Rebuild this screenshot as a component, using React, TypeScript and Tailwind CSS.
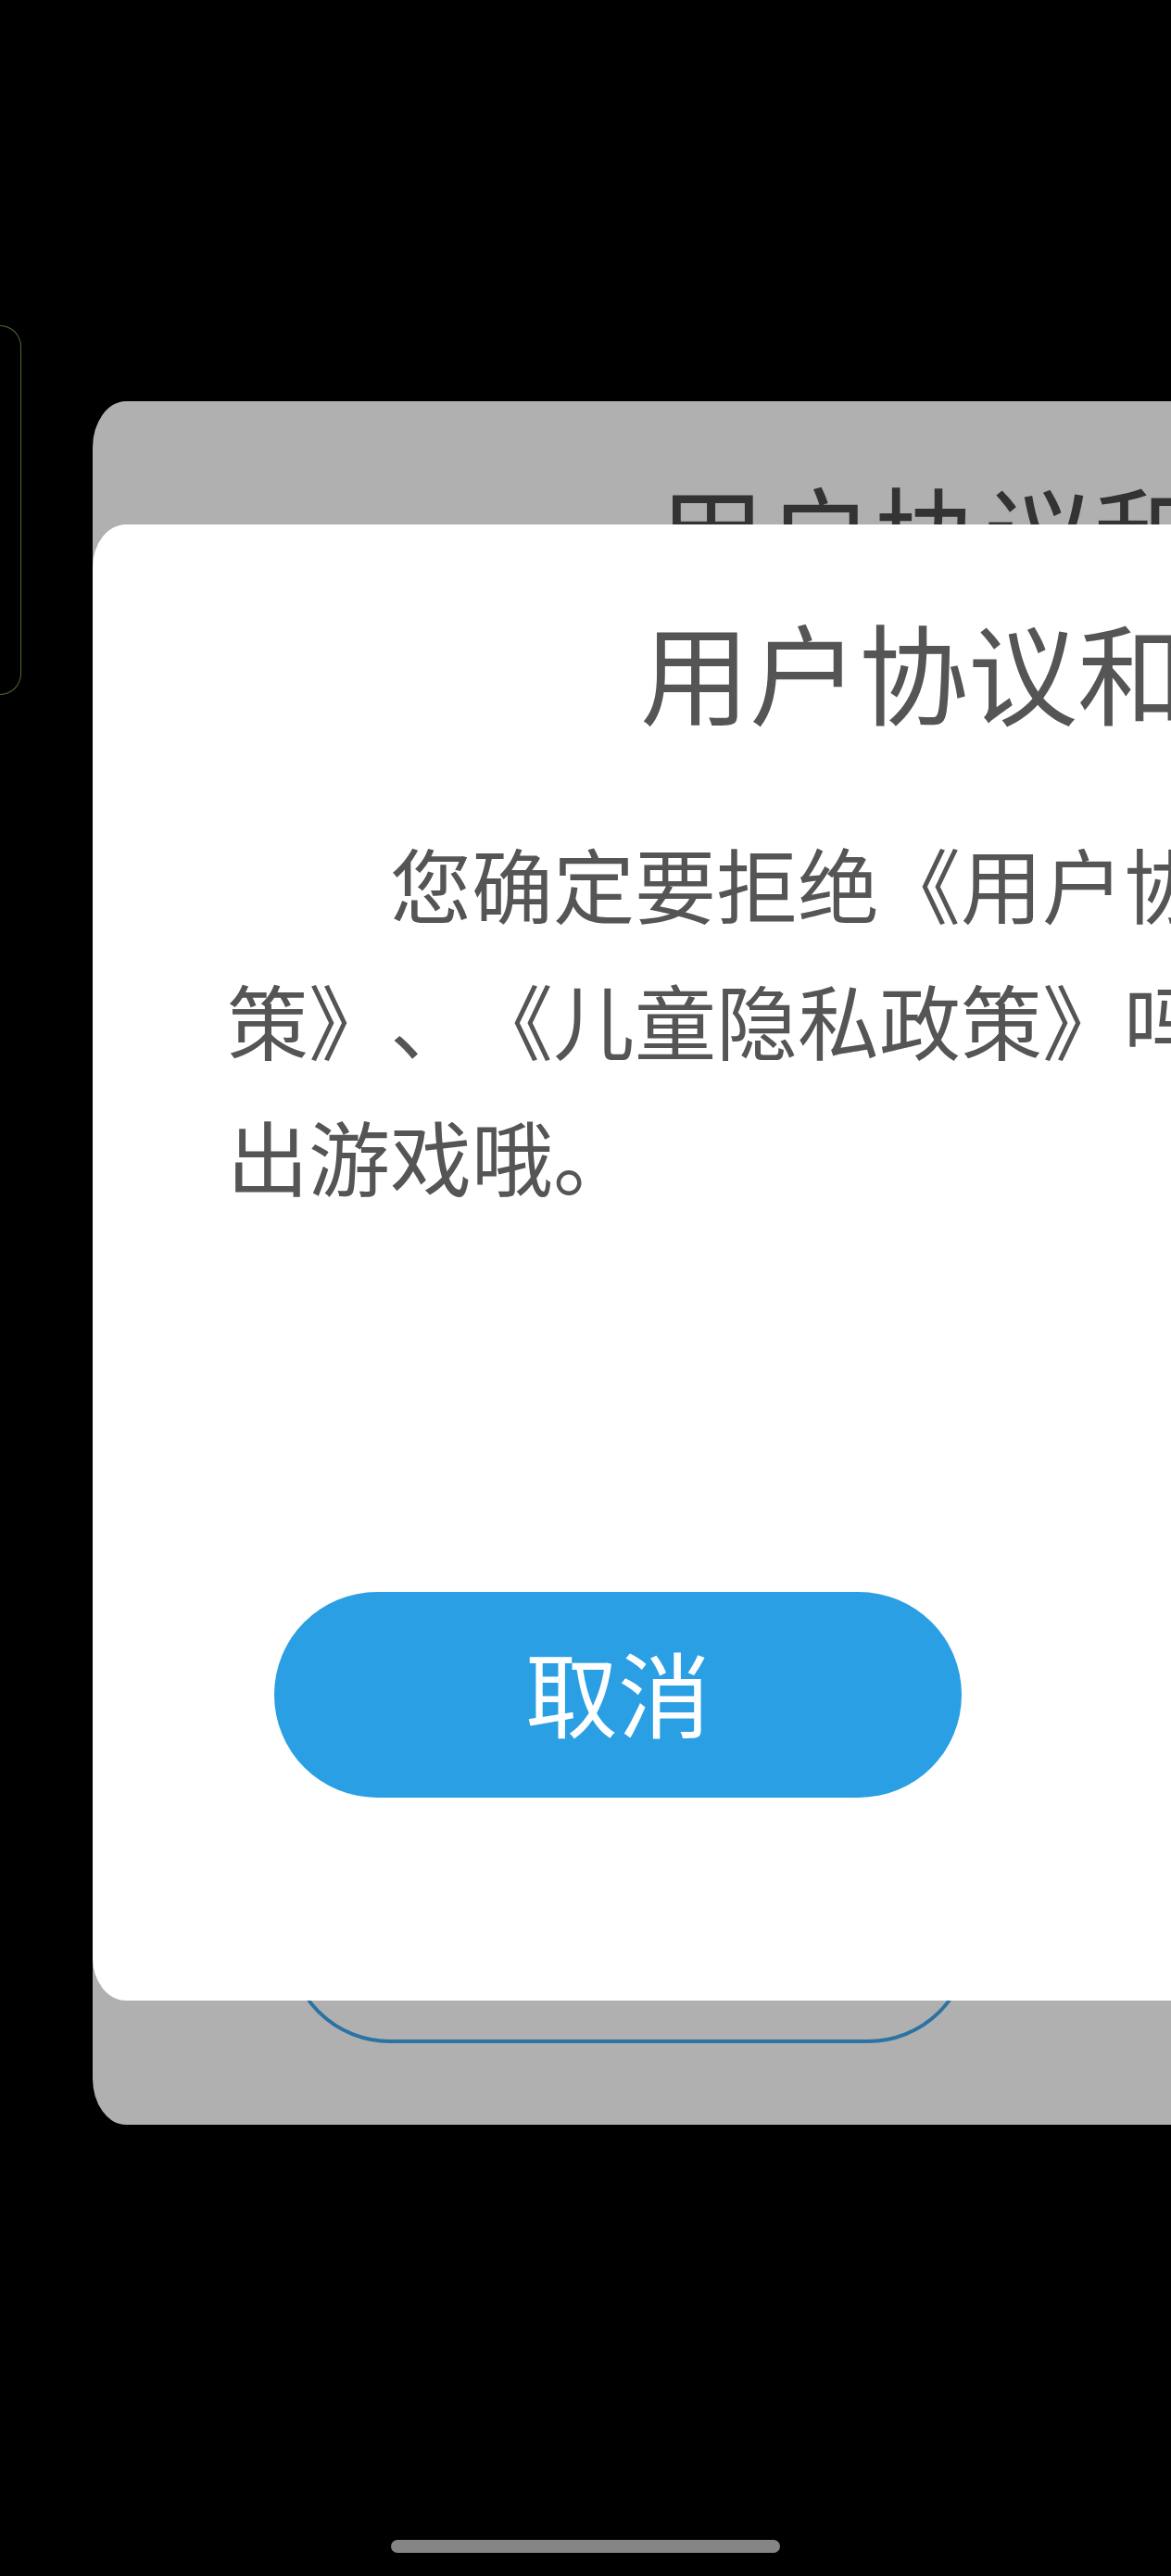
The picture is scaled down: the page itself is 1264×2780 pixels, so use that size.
const cjk = "font-['Noto_Sans_CJK_SC','Noto_Sans',sans-serif] [text-spacing-trim:space-all]";

export default function App() {
  return (
    <div className={`relative flex h-[2780px] w-[1264px] flex-col overflow-hidden bg-black ${cjk}`}>
      <div className="flex min-h-0 flex-1 items-start">
        {/* neighbouring card peeking in from the left */}
        <div className="mt-[351px] h-[399px] w-[23px] shrink-0 rounded-r-[24px] border border-l-0 border-[#507030]" />

        {/* dimmed dialog behind */}
        <div className="relative ml-[77px] mt-[433px] flex h-[1860px] w-[2244px] shrink-0 flex-col overflow-hidden rounded-[36px/50px] bg-[#b0b0b0]">
          <div className="pl-[34px] pt-[72px] text-center text-[118px] leading-[140px] text-[#333333]">
            用户协议和隐私政策
          </div>
          <div className="ml-[210px] mt-auto mb-[88px] h-[272px] w-[738px] rounded-[111px] border-[4px] border-[#2a73a3]" />

          {/* front dialog */}
          <div className="absolute inset-x-0 top-[133px] flex h-[1593px] flex-col rounded-[36px/46px] bg-white">
            <div className="pt-[87px] text-center text-[118px] leading-[140px] text-[#555555]">
              用户协议和隐私政策
            </div>
            <div className="whitespace-nowrap pl-[145px] pt-[85px] text-[88px] leading-[147px] text-[#555555]">
              <div className="pl-[176px]">您确定要拒绝《用户协议》、《隐私政</div>
              <div>策》、《儿童隐私政策》吗？拒绝后将无法进入</div>
              <div>出游戏哦。</div>
            </div>
            <div className="ml-[196px] mt-auto mb-[219px] flex h-[222px] w-[742px] items-center justify-center rounded-[111px] bg-[#2a9fe3] pb-[8px] text-[100px] text-white">
              取消
            </div>
          </div>
        </div>
      </div>

      {/* home indicator */}
      <div className="mb-[25px] h-[14px] w-[420px] self-center rounded-full bg-[#858585]" />
    </div>
  );
}
